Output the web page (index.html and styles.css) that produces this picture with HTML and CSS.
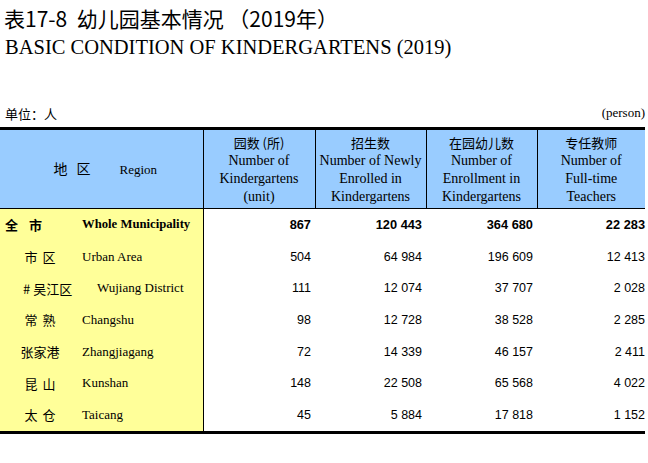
FILE: index.html
```html
<!DOCTYPE html>
<html lang="zh">
<head>
<meta charset="utf-8">
<link rel="stylesheet" href="styles.css">
</head>
<body>
<div class="page">
  <div class="title-cn">表17-8&nbsp; 幼儿园基本情况 （2019年）</div>
  <div class="title-en">BASIC CONDITION OF KINDERGARTENS (2019)</div>
  <div class="unit-row">
    <span class="unit-cn">单位：人</span>
    <span class="unit-en">(person)</span>
  </div>
  <table class="data">
    <colgroup>
      <col class="c-cn"><col class="c-en"><col class="c1"><col class="c2"><col class="c3"><col class="c4">
    </colgroup>
    <thead>
      <tr>
        <th colspan="2" class="h-region"><span class="cn hr-cn"><span class="gap9">地</span>区</span><span class="en region-en">Region</span></th>
        <th><span class="cn">园数 (所)</span><br><span class="en">Number of<br>Kindergartens<br>(unit)</span></th>
        <th><span class="cn">招生数</span><br><span class="en">Number of Newly<br>Enrolled in<br>Kindergartens</span></th>
        <th><span class="cn">在园幼儿数</span><br><span class="en">Number of<br>Enrollment in<br>Kindergartens</span></th>
        <th class="last"><span class="cn">专任教师</span><br><span class="en">Number of<br>Full-time<br>Teachers</span></th>
      </tr>
    </thead>
    <tbody>
      <tr class="total">
        <td class="rcn left"><span class="gap11">全</span>市</td><td class="ren">Whole Municipality</td>
        <td class="num">867</td><td class="num">120 443</td><td class="num">364 680</td><td class="num last">22 283</td>
      </tr>
      <tr>
        <td class="rcn"><span class="gap5">市</span>区</td><td class="ren">Urban Area</td>
        <td class="num">504</td><td class="num">64 984</td><td class="num">196 609</td><td class="num last">12 413</td>
      </tr>
      <tr>
        <td class="rcn sub"># 吴江区</td><td class="ren indent">Wujiang District</td>
        <td class="num">111</td><td class="num">12 074</td><td class="num">37 707</td><td class="num last">2 028</td>
      </tr>
      <tr>
        <td class="rcn"><span class="gap5">常</span>熟</td><td class="ren">Changshu</td>
        <td class="num">98</td><td class="num">12 728</td><td class="num">38 528</td><td class="num last">2 285</td>
      </tr>
      <tr>
        <td class="rcn">张家港</td><td class="ren">Zhangjiagang</td>
        <td class="num">72</td><td class="num">14 339</td><td class="num">46 157</td><td class="num last">2 411</td>
      </tr>
      <tr>
        <td class="rcn"><span class="gap5">昆</span>山</td><td class="ren">Kunshan</td>
        <td class="num">148</td><td class="num">22 508</td><td class="num">65 568</td><td class="num last">4 022</td>
      </tr>
      <tr>
        <td class="rcn"><span class="gap5">太</span>仓</td><td class="ren">Taicang</td>
        <td class="num">45</td><td class="num">5 884</td><td class="num">17 818</td><td class="num last">1 152</td>
      </tr>
    </tbody>
  </table>
</div>
</body>
</html>
```
FILE: styles.css
```css
html, body {
  margin: 0;
  padding: 0;
  background: #fff;
}
.page {
  width: 648px;
  padding-top: 4px;
  color: #000;
}
.title-cn {
  font-family: "Noto Sans CJK SC", sans-serif;
  font-size: 21px;
  line-height: 28px;
  padding-left: 4px;
}
.title-en {
  font-family: "Liberation Serif", serif;
  font-size: 20.5px;
  line-height: 26px;
  padding-left: 5px;
  margin-top: 2px;
}
.unit-row {
  display: flex;
  justify-content: space-between;
  align-items: center;
  margin-top: 45px;
  height: 16px;
  padding: 0 3px 0 5px;
}
.unit-cn {
  font-family: "Noto Sans CJK SC", sans-serif;
  font-size: 13px;
}
.unit-en {
  font-family: "Liberation Serif", serif;
  font-size: 13px;
}
.data {
  margin-top: 6px;
  border-collapse: collapse;
  table-layout: fixed;
  width: 645px;
  border-top: 3px solid #000;
  border-bottom: 3px solid #000;
}
.c-cn { width: 80px; }
.c-en { width: 123px; }
.c1 { width: 112px; }
.c2 { width: 111px; }
.c3 { width: 111px; }
.c4 { width: 108px; }
thead th {
  background: #99ccff;
  font-weight: normal;
  border-left: 1px solid #000;
  border-bottom: 1px solid #000;
  height: 78px;
  padding: 0;
  text-align: center;
  vertical-align: middle;
  line-height: 17px;
  white-space: nowrap;
}
thead th:first-child {
  border-left: none;
}
.cn {
  font-family: "Noto Sans CJK SC", sans-serif;
  font-size: 13px;
}
.en {
  font-family: "Liberation Serif", serif;
  font-size: 14px;
}
.hr-cn {
  font-size: 14px;
}
.gap9 { margin-right: 9px; }
.gap11 { margin-right: 11px; }
.gap5 { margin-right: 5px; }
.region-en {
  font-size: 13px;
  margin-left: 29px;
}
.h-region {
  padding-left: 8px;
}
tbody td {
  height: 31.7px;
  padding: 0;
  vertical-align: middle;
}
.rcn, .ren {
  background: #ffff99;
}
.rcn {
  font-family: "Noto Sans CJK SC", sans-serif;
  font-size: 13px;
  text-align: center;
  white-space: nowrap;
}
.rcn.left {
  text-align: left;
  padding-left: 5px;
  font-weight: bold;
}
.rcn.sub {
  text-align: left;
  padding-left: 23px;
}
.ren {
  font-family: "Liberation Serif", serif;
  font-size: 13px;
  padding-left: 2px;
  border-right: 1px solid #000;
  white-space: nowrap;
}
.ren.indent {
  padding-left: 17px;
}
.total .ren {
  font-weight: bold;
  font-size: 12.7px;
}
.num {
  font-family: "Liberation Sans", sans-serif;
  font-size: 12.5px;
  text-align: right;
  padding-right: 4px;
}
.total .num {
  font-weight: bold;
  font-size: 12.8px;
}
.num.last {
  padding-right: 0;
}
```
